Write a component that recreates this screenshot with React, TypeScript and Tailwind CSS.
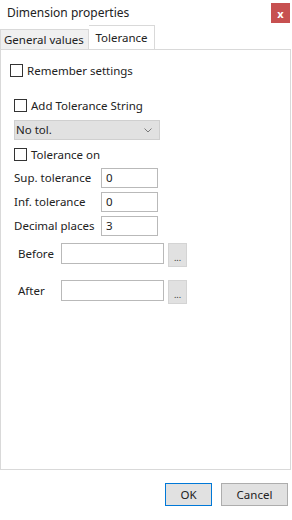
import React from "react";

const Check: React.FC<{ label: string; className?: string }> = ({ label, className }) => (
  <div className={`flex items-center h-[13px] gap-[4px] ${className || ""}`}>
    <div className="w-[13px] h-[13px] border border-[#333333] bg-white shrink-0" />
    <span className="leading-[13px]">{label}</span>
  </div>
);

const NumRow: React.FC<{ label: string; value: string }> = ({ label, value }) => (
  <div className="flex items-center h-[20px]">
    <span className="w-[87px] leading-[16px]">{label}</span>
    <div className="w-[57px] h-[20px] border border-[#b9b9b9] bg-white px-[4px] leading-[18px]">{value}</div>
  </div>
);

const TextRow: React.FC<{ label: string }> = ({ label }) => (
  <div className="flex items-start h-[24px]">
    <span className="w-[43px] mt-[3px] leading-[16px]">{label}</span>
    <div className="w-[103px] h-[21px] border border-[#b9b9b9] bg-white" />
    <div className="ml-[4px] w-[19px] h-[24px] border border-[#d4d4d4] bg-[#e1e1e1] flex items-end justify-center pb-[4px] text-[9px] leading-none text-[#333]">
      ...
    </div>
  </div>
);

export default function App() {
  return (
    <div
      className="w-[292px] h-[520px] bg-white text-[11.5px] text-[#222222] flex flex-col"
      style={{ fontFamily: '"Noto Sans", "Open Sans", sans-serif' }}
    >
      {/* title bar */}
      <div className="h-[24px] flex items-start justify-between">
        <span className="ml-[7px] mt-[5px] leading-[16px] text-[12px] whitespace-nowrap">Dimension properties</span>
        <div className="mt-[3px] mr-[2px] w-[19px] h-[20px] bg-[#c75050] flex items-center justify-center text-white text-[11px] font-bold leading-none">
          x
        </div>
      </div>

      {/* tabs */}
      <div className="h-[25px] flex items-end">
        <div className="h-[20px] w-[89px] bg-[#f0f0f0] border border-b-0 border-[#d9d9d9] flex items-center pl-[3px] leading-none whitespace-nowrap overflow-hidden">
          General values
        </div>
        <div className="h-[24px] w-[66px] bg-white border border-l-0 border-b-0 border-[#d9d9d9] flex items-center justify-center leading-none whitespace-nowrap">
          Tolerance
        </div>
      </div>

      {/* panel */}
      <div className="h-[421px] mr-[1px] border border-[#d9d9d9] flex flex-col">
        <Check label="Remember settings" className="ml-[9px] mt-[14px]" />
        <div className="ml-[13px] mt-[22px] flex flex-col">
          <Check label="Add Tolerance String" />
          <div className="mt-[8px] w-[146px] h-[20px] bg-[#e1e1e1] border border-[#cfcfcf] flex items-center justify-between pl-[1px] pr-[7px]">
            <span className="leading-[16px]">No tol.</span>
            <svg width="8" height="5" viewBox="0 0 8 5">
              <path d="M0.5 0.5 L4 4 L7.5 0.5" fill="none" stroke="#7a7a7a" strokeWidth="1" />
            </svg>
          </div>
          <Check label="Tolerance on" className="mt-[8px]" />
          <div className="mt-[7px] flex flex-col gap-[4px]">
            <NumRow label="Sup. tolerance" value="0" />
            <NumRow label="Inf. tolerance" value="0" />
            <NumRow label="Decimal places" value="3" />
          </div>
          <div className="ml-[4px] mt-[7px] flex flex-col gap-[13px]">
            <TextRow label="Before" />
            <TextRow label="After" />
          </div>
        </div>
      </div>

      {/* footer */}
      <div className="flex justify-end gap-[9px] mt-[13px] mr-[4px]">
        <div className="w-[47px] h-[23px] border border-[#0078d7] bg-[#e1e1e1] flex items-center justify-center leading-[16px]">
          OK
        </div>
        <div className="w-[67px] h-[23px] border border-[#adadad] bg-[#e1e1e1] flex items-center justify-center leading-[16px]">
          Cancel
        </div>
      </div>
    </div>
  );
}
